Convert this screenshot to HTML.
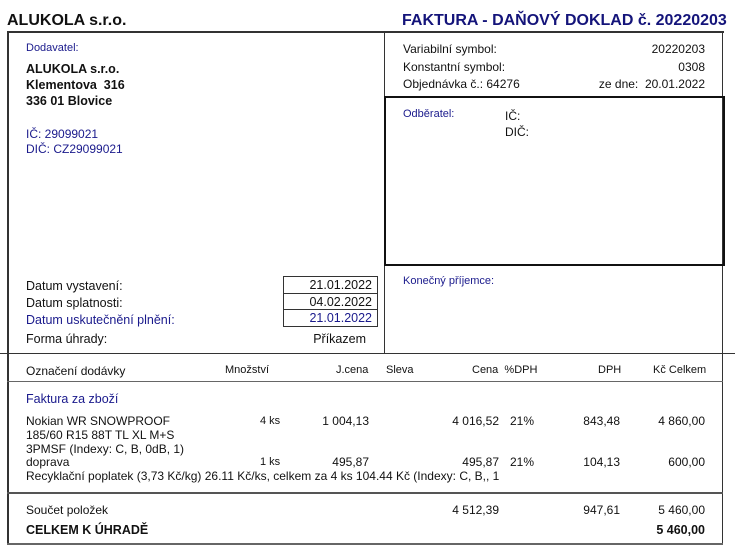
<!DOCTYPE html>
<html><head><meta charset="utf-8"><style>
body{margin:0;width:735px;height:547px;background:#fff;position:relative;overflow:hidden;font-family:"Liberation Sans",sans-serif;color:#111;}
.a{position:absolute;white-space:nowrap;}
.l{position:absolute;background:#333;}
.b{color:#1a1a8c;}
.s{font-size:11px;}
.t{font-size:12px;}
.m{font-size:12px;}
.r{text-align:right;}
.bx{position:absolute;border:1px solid #333;box-sizing:border-box;text-align:right;font-size:12.5px;padding-right:5px;line-height:17px;}
</style></head><body>
<div class="a" style="left:7px;top:12px;font-size:16px;font-weight:bold;">ALUKOLA s.r.o.</div>
<div class="a" style="left:402px;top:12px;font-size:16px;font-weight:bold;color:#14147a;">FAKTURA - DAŇOVÝ DOKLAD č. 20220203</div>
<div class="l" style="left:7px;top:31px;width:717px;height:2px;"></div>
<div class="l" style="left:7px;top:31px;width:2px;height:514px;"></div>
<div class="l" style="left:722px;top:31px;width:1px;height:514px;"></div>
<div class="l" style="left:384px;top:31px;width:1px;height:322px;"></div>
<div style="position:absolute;left:384px;top:96px;width:341px;height:170px;border:2px solid #111;box-sizing:border-box;"></div>
<div class="l" style="left:0px;top:353px;width:735px;height:1px;"></div>
<div class="l" style="left:7px;top:381px;width:716px;height:1px;background:#666;"></div>
<div class="l" style="left:7px;top:492px;width:716px;height:2px;background:#555;"></div>
<div class="l" style="left:7px;top:543px;width:716px;height:2px;background:#666;"></div>

<div class="a b s" style="left:26px;top:42px;">Dodavatel:</div>
<div class="a" style="left:26px;top:61px;font-size:12.5px;font-weight:bold;line-height:16px;">ALUKOLA s.r.o.<br>Klementova&nbsp; 316<br>336 01 Blovice</div>
<div class="a b m" style="left:26px;top:127px;line-height:15px;">IČ: 29099021<br>DIČ: CZ29099021</div>

<div class="a m" style="left:403px;top:42px;">Variabilní symbol:</div>
<div class="a m" style="left:403px;top:60px;">Konstantní symbol:</div>
<div class="a m" style="left:403px;top:77px;">Objednávka č.: 64276</div>
<div class="a m r" style="right:30px;top:42px;">20220203</div>
<div class="a m r" style="right:30px;top:60px;">0308</div>
<div class="a m r" style="right:30px;top:77px;">ze dne:&nbsp; 20.01.2022</div>

<div class="a b s" style="left:403px;top:108px;">Odběratel:</div>
<div class="a m" style="left:505px;top:108px;line-height:16px;">IČ:<br>DIČ:</div>
<div class="a b s" style="left:403px;top:275px;">Konečný příjemce:</div>

<div class="a" style="left:26px;top:278px;font-size:12.5px;line-height:17px;">Datum vystavení:<br>Datum splatnosti:<br><span class="b">Datum uskutečnění plnění:</span></div>
<div class="bx" style="left:283px;top:276px;width:95px;height:18px;">21.01.2022</div>
<div class="bx" style="left:283px;top:293px;width:95px;height:17px;line-height:16px;">04.02.2022</div>
<div class="bx b" style="left:283px;top:309px;width:95px;height:18px;">21.01.2022</div>
<div class="a" style="left:26px;top:332px;font-size:12.5px;">Forma úhrady:</div>
<div class="a" style="right:369px;top:332px;font-size:12.5px;">Příkazem</div>

<div class="a" style="left:26px;top:364px;font-size:12px;">Označení dodávky</div>
<div class="a s" style="left:225px;top:364px;">Množství</div>
<div class="a s" style="left:336px;top:364px;">J.cena</div>
<div class="a s" style="left:386px;top:364px;">Sleva</div>
<div class="a s" style="left:472px;top:364px;">Cena&nbsp; %DPH</div>
<div class="a s" style="left:598px;top:364px;">DPH</div>
<div class="a s" style="left:653px;top:364px;">Kč Celkem</div>

<div class="a b" style="left:26px;top:392px;font-size:12.5px;">Faktura za zboží</div>
<div class="a t" style="left:26px;top:414px;line-height:14px;">Nokian WR SNOWPROOF<br>185/60 R15 88T TL XL M+S<br>3PMSF (Indexy: C, B, 0dB, 1)</div>
<div class="a t" style="left:26px;top:455px;">doprava</div>
<div class="a s" style="left:260px;top:415px;">4 ks</div>
<div class="a s" style="left:260px;top:456px;">1 ks</div>
<div class="a t r" style="right:366px;top:414px;">1 004,13</div>
<div class="a t r" style="right:366px;top:455px;">495,87</div>
<div class="a t r" style="right:236px;top:414px;">4 016,52</div>
<div class="a t r" style="right:236px;top:455px;">495,87</div>
<div class="a t" style="left:510px;top:414px;">21%</div>
<div class="a t" style="left:510px;top:455px;">21%</div>
<div class="a t r" style="right:115px;top:414px;">843,48</div>
<div class="a t r" style="right:115px;top:455px;">104,13</div>
<div class="a t r" style="right:30px;top:414px;">4 860,00</div>
<div class="a t r" style="right:30px;top:455px;">600,00</div>
<div class="a t" style="left:26px;top:469px;">Recyklační poplatek (3,73 Kč/kg) 26.11 Kč/ks, celkem za 4 ks 104.44 Kč (Indexy: C, B,, 1</div>

<div class="a t" style="left:26px;top:503px;">Součet položek</div>
<div class="a t r" style="right:236px;top:503px;">4 512,39</div>
<div class="a t r" style="right:115px;top:503px;">947,61</div>
<div class="a t r" style="right:30px;top:503px;">5 460,00</div>
<div class="a" style="left:26px;top:523px;font-size:12.5px;font-weight:bold;">CELKEM K ÚHRADĚ</div>
<div class="a r" style="right:30px;top:523px;font-size:12.5px;font-weight:bold;">5 460,00</div>
</body></html>
